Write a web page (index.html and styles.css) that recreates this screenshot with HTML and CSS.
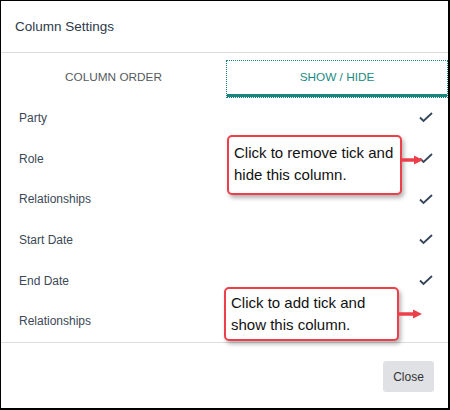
FILE: index.html
```html
<!DOCTYPE html>
<html>
<head>
<meta charset="utf-8">
<link rel="stylesheet" href="styles.css">
</head>
<body>
<div class="frame">
  <div class="header">Column Settings</div>
  <div class="tabs">
    <div class="tab">COLUMN ORDER</div>
    <div class="tab active">SHOW / HIDE</div>
  </div>
  <div class="list">
    <div class="row"><span>Party</span><svg class="tick" width="14" height="11" viewBox="0 0 14 11"><polyline points="1,5.5 4.5,9 13,1" /></svg></div>
    <div class="row"><span>Role</span><svg class="tick" width="14" height="11" viewBox="0 0 14 11"><polyline points="1,5.5 4.5,9 13,1" /></svg></div>
    <div class="row"><span>Relationships</span><svg class="tick" width="14" height="11" viewBox="0 0 14 11"><polyline points="1,5.5 4.5,9 13,1" /></svg></div>
    <div class="row"><span>Start Date</span><svg class="tick" width="14" height="11" viewBox="0 0 14 11"><polyline points="1,5.5 4.5,9 13,1" /></svg></div>
    <div class="row"><span>End Date</span><svg class="tick" width="14" height="11" viewBox="0 0 14 11"><polyline points="1,5.5 4.5,9 13,1" /></svg></div>
    <div class="row"><span>Relationships</span></div>
  </div>
  <div class="footer">
    <button class="close">Close</button>
  </div>

  <div class="callout callout-remove">Click to remove tick and<br>hide this column.</div>
  <svg class="arrow arrow-remove" width="24" height="10" viewBox="0 0 24 10"><line x1="0" y1="5" x2="15" y2="5" /><polygon points="14,0.5 23,5 14,9.5" /></svg>

  <div class="callout callout-add">Click to add tick and<br>show this column.</div>
  <svg class="arrow arrow-add" width="26" height="10" viewBox="0 0 26 10"><line x1="0" y1="5" x2="17" y2="5" /><polygon points="16,0.5 25,5 16,9.5" /></svg>
</div>
</body>
</html>
```

FILE: styles.css
```css
* { box-sizing: border-box; }
html, body { margin: 0; padding: 0; background: #fff; }
body { font-family: "Liberation Sans", Arial, sans-serif; }

.frame {
  position: relative;
  width: 450px;
  height: 410px;
  border-style: solid;
  border-color: #000;
  border-width: 1px 2px 2px 1px;
  display: flex;
  flex-direction: column;
  background: #fff;
}

.header {
  height: 52px;
  flex: none;
  display: flex;
  align-items: center;
  padding-left: 14px;
  font-size: 13.5px;
  color: #2d3a4b;
  border-bottom: 1px solid #dcdcdc;
}

.tabs {
  margin-top: 7px;
  height: 38px;
  flex: none;
  display: flex;
}
.tab {
  flex: 1;
  display: flex;
  align-items: center;
  justify-content: center;
  padding-bottom: 4px;
  font-size: 11.8px;
  color: #555a60;
}
.tab:first-child { flex: none; width: 225px; }
.tab.active {
  color: #1b8a84;
  border: 1px dotted #1b7f7a;
  box-shadow: inset 0 -3px 0 #198580;
}

.list {
  height: 244px;
  flex: none;
  display: flex;
  flex-direction: column;
}
.row {
  flex: 1;
  display: flex;
  align-items: center;
  justify-content: space-between;
  padding: 0 15px 1px 18px;
  font-size: 12px;
  color: #3b4857;
}
.tick { display: block; }
.tick polyline {
  fill: none;
  stroke: #34455a;
  stroke-width: 1.8;
}

.footer {
  flex: 1;
  border-top: 1px solid #dcdcdc;
  display: flex;
  align-items: center;
  justify-content: flex-end;
  padding: 2px 14px 0 0;
}
.close {
  width: 51px;
  height: 31px;
  border: none;
  border-radius: 3px;
  background: #dfe1e5;
  font-family: "Liberation Sans", Arial, sans-serif;
  font-size: 12px;
  color: #333;
  padding: 0;
}

.callout {
  position: absolute;
  border: 2px solid #ec3f49;
  border-radius: 5px;
  background: #fff;
  font-size: 15px;
  line-height: 22px;
  color: #111;
  box-shadow: 2px 3px 4px rgba(0, 0, 0, 0.3);
  white-space: nowrap;
}
.callout-remove {
  left: 226px;
  top: 134px;
  width: 175px;
  height: 60px;
  padding: 5px 0 0 5px;
}
.callout-add {
  left: 223px;
  top: 286px;
  width: 175px;
  height: 54px;
  padding: 3px 0 0 5px;
}

.arrow {
  position: absolute;
  overflow: visible;
}
.arrow line { stroke: #ec3f49; stroke-width: 3.5; }
.arrow polygon { fill: #ec3f49; }
.arrow-remove { left: 399px; top: 154px; }
.arrow-add { left: 396px; top: 308px; }
```
